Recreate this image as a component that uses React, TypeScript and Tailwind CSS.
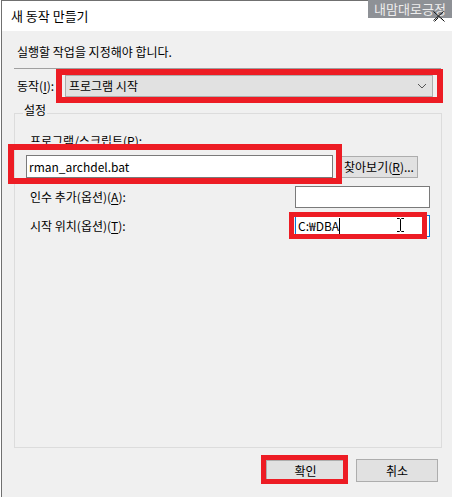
import React from 'react'

const RedBox = ({ className }: { className: string }) => (
  <div className={`pointer-events-none absolute border-[#ed1c24] ${className}`} />
)

const Btn = ({ children, className = '' }: { children: React.ReactNode; className?: string }) => (
  <button className={`flex items-center justify-center border border-[#adadad] bg-[#e1e1e1] leading-[16px] text-black ${className}`}>
    {children}
  </button>
)

const App = () => {
  return (
    <div className="relative h-[497px] w-[452px] overflow-hidden bg-white font-['Noto_Sans_CJK_KR','Noto_Sans',sans-serif] text-[12px] text-black">
      <div className="ml-px flex h-full flex-col border-l border-t border-[#707070]">
        {/* title bar */}
        <div className="flex h-[30px] shrink-0 items-center justify-between bg-white pl-[9px] pr-[7px]">
          <span className="text-[13px] leading-[18px]">새 동작 만들기</span>
          <svg width="11" height="11" viewBox="0 0 11 11" className="mt-[1px]">
            <path d="M0.5 0.5 L10.5 10.5 M10.5 0.5 L0.5 10.5" stroke="#111" strokeWidth="1" />
          </svg>
        </div>

        {/* body */}
        <div className="flex flex-1 flex-col bg-[#f0f0f0]">
          <p className="ml-[15px] mt-[13px] leading-[16px]">실행할 작업을 지정해야 합니다.</p>
          <div className="ml-[12px] mt-[8px] h-px w-[427px] bg-[#a0a0a0]" />

          <div className="mt-[6px] flex items-center">
            <span className="ml-[15px] w-[48px] leading-[16px]">
              동작(<u className="underline-offset-2">I</u>):
            </span>
            <div className="flex h-[22px] w-[368px] items-center justify-between border border-[#adadad] bg-[#e1e1e1] pl-[3px] pr-[5px]">
              <span className="leading-[16px]">프로그램 시작</span>
              <svg width="10" height="6" viewBox="0 0 10 6">
                <polyline points="1,1 5,5 9,1" fill="none" stroke="#555" strokeWidth="1" />
              </svg>
            </div>
          </div>

          {/* 설정 group */}
          <div className="relative ml-[12px] mt-[16px] h-[335px] w-[428px] border border-[#dcdcdc]">
            <span className="absolute left-[8px] top-[-12px] bg-[#f0f0f0] px-px leading-[16px]">설정</span>

            <p className="ml-[15px] mt-[19px] leading-[16px]">
              프로그램/스크립트(<u className="underline-offset-2">P</u>):
            </p>
            <div className="mt-[6px] flex items-start">
              <div className="ml-[11px] flex h-[23px] w-[307px] items-center border border-[#7a7a7a] bg-white pl-[2px]">
                <span className="leading-[16px]">rman_archdel.bat</span>
              </div>
              <Btn className="ml-[7px] mt-px h-[22px] w-[78px]">
                찾아보기(<u className="underline-offset-2">R</u>)...
              </Btn>
            </div>

            <div className="mt-[8px] flex items-center justify-between pr-[11px]">
              <span className="ml-[15px] leading-[16px]">
                인수 추가(옵션)(<u className="underline-offset-2">A</u>):
              </span>
              <div className="h-[22px] w-[135px] border border-[#7a7a7a] bg-white" />
            </div>

            <div className="mt-[7px] flex items-center justify-between pr-[11px]">
              <span className="ml-[15px] leading-[16px]">
                시작 위치(옵션)(<u className="underline-offset-2">T</u>):
              </span>
              <div className="flex h-[22px] w-[135px] items-center border border-[#0078d7] bg-white pl-[2px]">
                <span className="border-r border-black leading-[16px]">C:₩DBA</span>
              </div>
            </div>
          </div>

          <div className="mt-[11px] flex justify-end gap-[10px] pr-[14px]">
            <Btn className="h-[23px] w-[81px] border-2 border-[#0078d7]">확인</Btn>
            <Btn className="h-[23px] w-[82px]">취소</Btn>
          </div>
        </div>
      </div>

      {/* mouse cursor */}
      <svg className="absolute left-[396px] top-[218px]" width="9" height="14" viewBox="0 0 9 14">
        <path d="M1 0.5 H3.5 L4.5 1.5 L5.5 0.5 H8 M4.5 1.5 V12.5 M1 13.5 H3.5 L4.5 12.5 L5.5 13.5 H8" fill="none" stroke="#000" strokeWidth="1" />
      </svg>

      {/* watermark */}
      <div className="absolute right-0 top-0 flex h-[18px] w-[84px] items-center justify-center whitespace-nowrap bg-[#8e9196] text-[13px] leading-[18px] text-[#eeeeee]">
        내맘대로긍정
      </div>
      <svg className="absolute left-[433px] top-[11px]" width="11" height="10" viewBox="0 0 11 10">
        <path d="M0.5 0.5 L10.5 9.5 M10.5 0.5 L0.5 9.5" stroke="#111" strokeWidth="1" />
      </svg>

      {/* annotation boxes */}
      <RedBox className="left-[56px] top-[69px] h-[34px] w-[387px] border-[6px]" />
      <RedBox className="left-[8px] top-[144px] h-[40px] w-[334px] border-[6px]" />
      <RedBox className="left-[289px] top-[212px] h-[27px] w-[138px] border-[5px]" />
      <RedBox className="left-[261px] top-[455px] h-[29px] w-[87px] border-[5px]" />
    </div>
  )
}

export default App
